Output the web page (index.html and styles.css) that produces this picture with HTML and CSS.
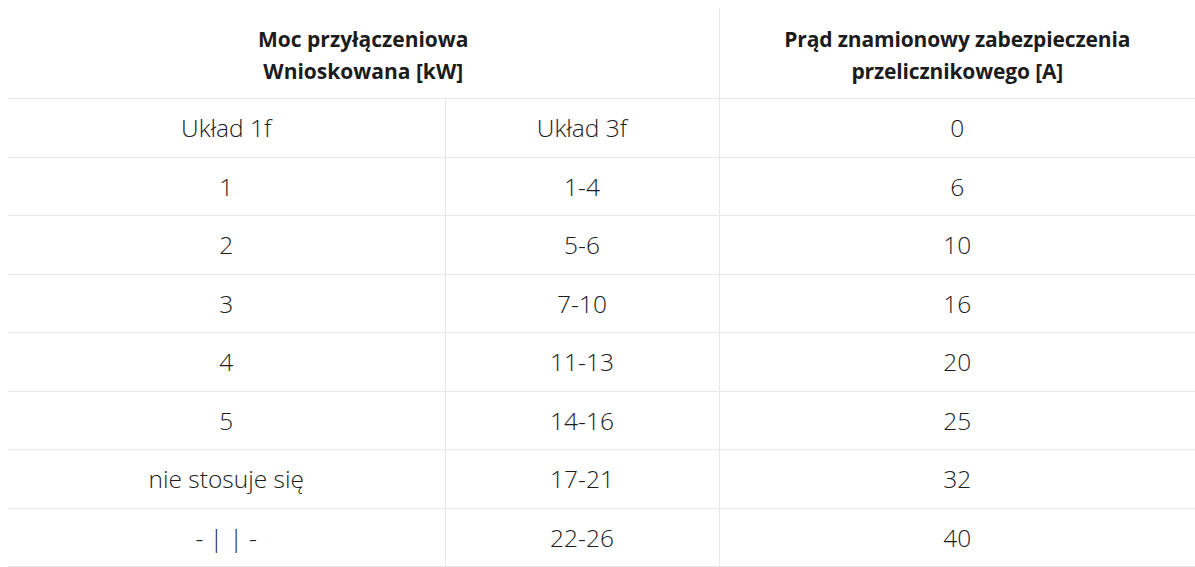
FILE: index.html
```html
<!DOCTYPE html>
<html lang="pl">
<head>
<meta charset="utf-8">
<title>Tabela</title>
<link rel="stylesheet" href="styles.css">
</head>
<body>
<table class="power-table">
  <colgroup>
    <col class="c1"><col class="c2"><col class="c3">
  </colgroup>
  <thead>
    <tr>
      <th colspan="2">Moc przyłączeniowa<br>Wnioskowana [kW]</th>
      <th class="narrow">Prąd znamionowy zabezpieczenia<br>przelicznikowego [A]</th>
    </tr>
  </thead>
  <tbody>
    <tr><td>Układ 1f</td><td>Układ 3f</td><td>0</td></tr>
    <tr><td>1</td><td>1-4</td><td>6</td></tr>
    <tr><td>2</td><td>5-6</td><td>10</td></tr>
    <tr><td>3</td><td>7-10</td><td>16</td></tr>
    <tr><td>4</td><td>11-13</td><td>20</td></tr>
    <tr><td>5</td><td>14-16</td><td>25</td></tr>
    <tr><td>nie stosuje się</td><td>17-21</td><td>32</td></tr>
    <tr><td>- | | -</td><td>22-26</td><td>40</td></tr>
  </tbody>
</table>
</body>
</html>
```
FILE: styles.css
```css
html, body {
  margin: 0;
  padding: 0;
  background: #fff;
}
body {
  padding: 8px 0 0 8px;
  font-family: "Open Sans", "Liberation Sans", sans-serif;
  color: #1c1c1c;
}
.power-table {
  width: 1187px;
  border-collapse: collapse;
  table-layout: fixed;
}
.c1 { width: 437px; }
.c2 { width: 274px; }
.c3 { width: 476px; }
.power-table th {
  font-weight: 700;
  font-size: 21px;
  line-height: 32px;
  height: 90px;
  box-sizing: border-box;
  padding: 15px 10px 11px;
  text-align: center;
  border-bottom: 1px solid #e8e8e8;
  border-left: 1px solid #e8e8e8;
}
.power-table th:first-child { border-left: none; }
.power-table th.narrow { letter-spacing: -0.15px; }
.power-table td {
  font-weight: 300;
  font-size: 24.5px;
  line-height: 30px;
  height: 59px;
  box-sizing: border-box;
  padding: 13px 10px;
  text-align: center;
  border-bottom: 1px solid #e8e8e8;
  border-left: 1px solid #e8e8e8;
}
.power-table tbody tr:nth-child(even) td { height: 58px; padding: 12px 10px; }
.power-table td:first-child { border-left: none; }
```
